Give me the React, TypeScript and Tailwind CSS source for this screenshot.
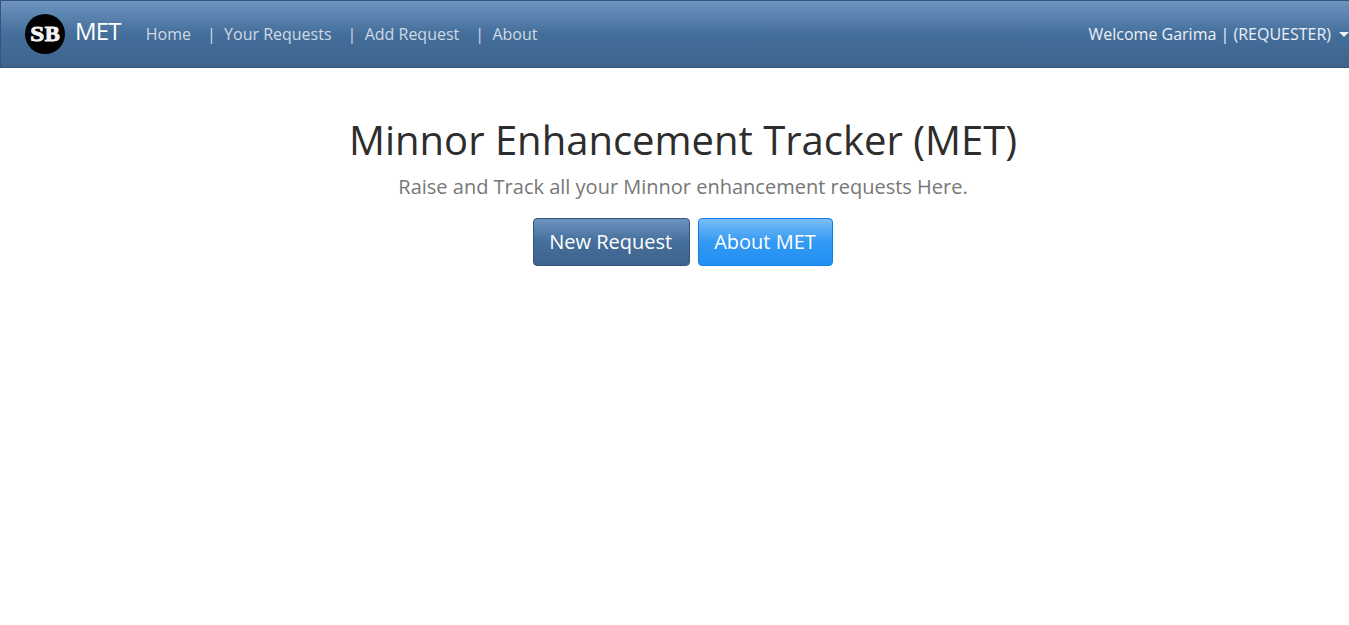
export default function App() {
  return (
    <div className="min-h-screen w-full overflow-hidden bg-white font-['Open_Sans',sans-serif] text-base leading-6 text-[#2d2d2d]">
      <nav className="flex h-[68px] w-[1366px] items-center border border-[#345578] bg-[linear-gradient(180deg,#6d94bf,#446e9b_50%,#3e648d)] pl-6 pr-4">
        <a className="flex items-center text-2xl text-white">
          <svg className="mr-2.5 size-10" viewBox="0 0 40 40">
            <circle cx="20" cy="20" r="20" fill="#000" />
            <g fontFamily="Liberation Serif, serif" fontWeight="bold" fontSize="22" fill="#f4f4f4" stroke="#f4f4f4" strokeWidth="0.9">
              <text x="5.3" y="27.4" textLength="14" lengthAdjust="spacingAndGlyphs">S</text>
              <text x="19.7" y="27.4" textLength="15" lengthAdjust="spacingAndGlyphs">B</text>
            </g>
          </svg>
          <span className="mb-1.5 tracking-[-0.8px]">MET</span>
        </a>
        <div className="ml-[25px] flex items-center text-white/75">
          <a>Home</a>
          <a className="ml-4 whitespace-pre">|  Your Requests</a>
          <a className="ml-4 whitespace-pre">|  Add Request</a>
          <a className="ml-4 whitespace-pre">|  About</a>
        </div>
        <a className="ml-auto flex items-center text-white/90">
          Welcome Garima | (REQUESTER)
          <span className="ml-2 border-x-[5px] border-t-[5px] border-x-transparent border-t-white/90" />
        </a>
      </nav>
      <main className="flex w-[1366px] flex-col items-center pt-12">
        <h1 className="mb-2 text-[40px] leading-[48px]">Minnor Enhancement Tracker (MET)</h1>
        <p className="mb-4 text-xl leading-[30px] text-[#777]">Raise and Track all your Minnor enhancement requests Here.</p>
        <div className="flex gap-2 text-xl leading-[30px] text-white">
          <button className="h-12 rounded border border-[#345578] bg-[linear-gradient(180deg,#6d94bf,#446e9b_50%,#3e648d)] pl-[15px] pr-[17px]">New Request</button>
          <button className="h-12 rounded border border-[#0e80e5] bg-[linear-gradient(180deg,#7bbdf7,#3399f3_50%,#208ff2)] pl-[15px] pr-4">About MET</button>
        </div>
      </main>
    </div>
  );
}
